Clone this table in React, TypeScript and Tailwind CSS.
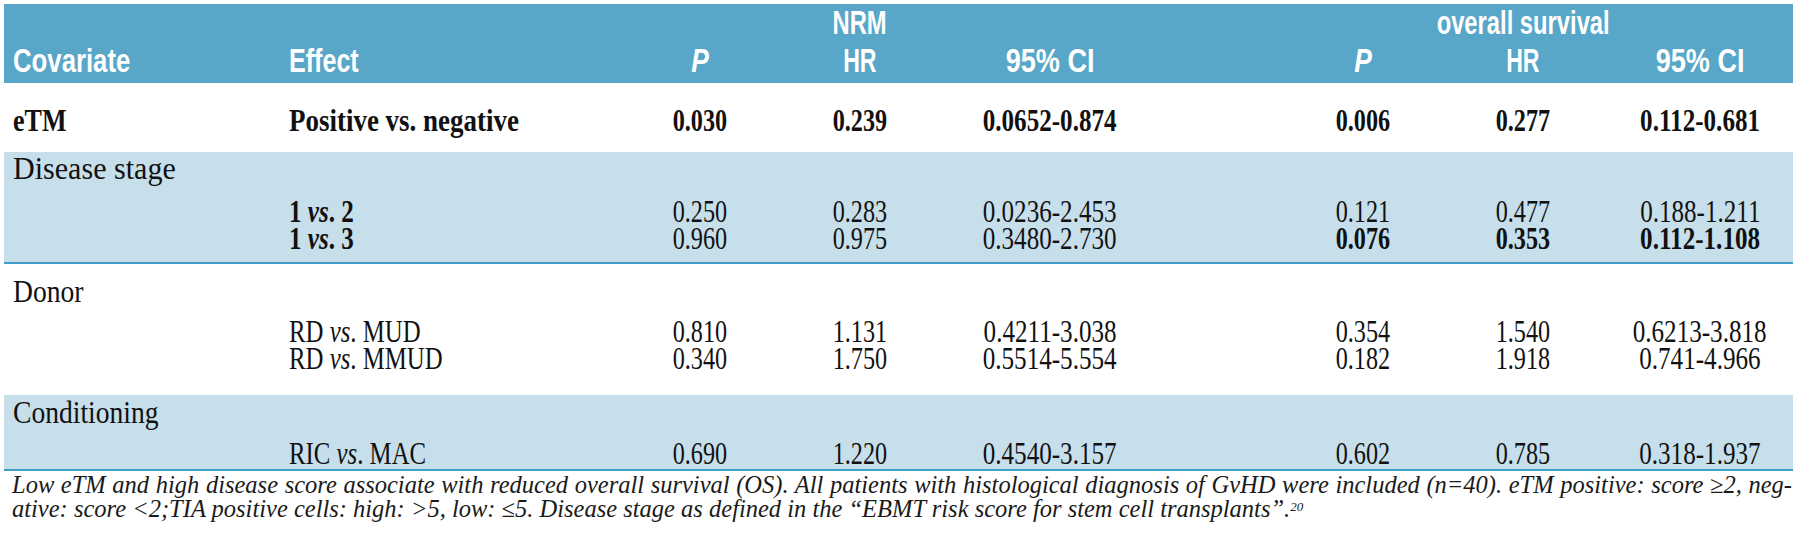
import React from "react";

const COLS =
  "grid grid-cols-[281px_355px_120px_200px_180px_163px_120px_200px_154px]";

function Txt({ children, cls }: { children: React.ReactNode; cls: string }) {
  return (
    <div className="flex items-center pl-[9px]">
      <span className={`inline-block origin-left whitespace-nowrap ${cls}`}>{children}</span>
    </div>
  );
}

function Eff({ children, cls }: { children: React.ReactNode; cls: string }) {
  return (
    <div className="flex items-center pl-[4px]">
      <span className={`inline-block origin-left whitespace-nowrap ${cls}`}>{children}</span>
    </div>
  );
}

function Num({ v, bold }: { v: string; bold?: boolean }) {
  const range = v.includes("-");
  let cls = "inline-block whitespace-nowrap scale-x-[0.78]";
  if (range && bold) cls = "inline-block whitespace-nowrap scale-x-[0.81] font-bold";
  else if (range) cls = "inline-block whitespace-nowrap scale-x-[0.81]";
  else if (bold) cls = "inline-block whitespace-nowrap scale-x-[0.78] font-bold";
  return (
    <div className="flex items-center justify-center">
      <span className={cls}>{v}</span>
    </div>
  );
}

function Head({ children, cls }: { children: React.ReactNode; cls: string }) {
  return (
    <div className="flex items-center justify-center">
      <span className={`inline-block whitespace-nowrap ${cls}`}>{children}</span>
    </div>
  );
}

type RowProps = {
  cov?: React.ReactNode;
  covCls?: string;
  eff?: React.ReactNode;
  effCls?: string;
  vals?: string[];
  bold?: boolean[];
  h: string;
};

function Row({ cov, covCls, eff, effCls, vals, bold, h }: RowProps) {
  const b = bold ?? [];
  return (
    <div className={`${COLS} ${h}`}>
      <Txt cls={covCls ?? ""}>{cov}</Txt>
      <Eff cls={effCls ?? ""}>{eff}</Eff>
      {vals ? (
        <>
          <Num v={vals[0]} bold={b[0]} />
          <Num v={vals[1]} bold={b[1]} />
          <Num v={vals[2]} bold={b[2]} />
          <div />
          <Num v={vals[3]} bold={b[3]} />
          <Num v={vals[4]} bold={b[4]} />
          <Num v={vals[5]} bold={b[5]} />
        </>
      ) : null}
    </div>
  );
}

export default function App() {
  return (
    <div className="w-[1800px] h-[542px] overflow-hidden bg-white pt-[4px] pl-[4px] text-[#111111]">
      <div className="w-[1789px] font-['Liberation_Serif',serif] text-[31px] leading-none">
        {/* Header */}
        <div className="bg-[#58a6c8] pb-[4px] font-['Liberation_Sans',sans-serif] text-[33px] font-bold leading-none text-white">
          <div className={`${COLS} h-[37px]`}>
            <div />
            <div />
            <div />
            <Head cls="scale-x-[0.72]">NRM</Head>
            <div />
            <div />
            <div />
            <Head cls="scale-x-[0.72]">overall survival</Head>
            <div />
          </div>
          <div className={`${COLS} h-[38px]`}>
            <div className="flex items-center pl-[9px]">
              <span className="inline-block origin-left scale-x-[0.78] whitespace-nowrap">Covariate</span>
            </div>
            <div className="flex items-center pl-[4px]">
              <span className="inline-block origin-left scale-x-[0.76] whitespace-nowrap">Effect</span>
            </div>
            <Head cls="scale-x-[0.8] italic">P</Head>
            <Head cls="scale-x-[0.7]">HR</Head>
            <Head cls="scale-x-[0.82]">95% CI</Head>
            <div />
            <Head cls="scale-x-[0.8] italic">P</Head>
            <Head cls="scale-x-[0.7]">HR</Head>
            <Head cls="scale-x-[0.82]">95% CI</Head>
          </div>
        </div>

        {/* eTM */}
        <div className="h-[69px] bg-white pt-[22px]">
          <Row
            h="h-[28px]"
            cov="eTM"
            covCls="font-bold scale-x-[0.84]"
            eff="Positive vs. negative"
            effCls="font-bold scale-x-[0.87]"
            vals={["0.030", "0.239", "0.0652-0.874", "0.006", "0.277", "0.112-0.681"]}
            bold={[true, true, true, true, true, true]}
          />
        </div>

        {/* Disease stage */}
        <div className="h-[112px] border-b-2 border-[#3f9dc7] bg-[#c7deeb]">
          <Row h="h-[32px]" cov="Disease stage" covCls="scale-x-[0.97]" />
          <div className="mt-[12px]">
            <Row
              h="h-[27px]"
              eff={
                <>
                  1 <i>vs</i>. 2
                </>
              }
              effCls="font-bold scale-x-[0.81]"
              vals={["0.250", "0.283", "0.0236-2.453", "0.121", "0.477", "0.188-1.211"]}
            />
            <Row
              h="h-[27px]"
              eff={
                <>
                  1 <i>vs</i>. 3
                </>
              }
              effCls="font-bold scale-x-[0.81]"
              vals={["0.960", "0.975", "0.3480-2.730", "0.076", "0.353", "0.112-1.108"]}
              bold={[false, false, false, true, true, true]}
            />
          </div>
        </div>

        {/* Donor */}
        <div className="h-[131px] bg-white pt-[11px]">
          <Row h="h-[32px]" cov="Donor" covCls="scale-x-[0.89]" />
          <div className="mt-[9px]">
            <Row
              h="h-[27px]"
              eff={
                <>
                  RD <i>vs</i>. MUD
                </>
              }
              effCls="scale-x-[0.8]"
              vals={["0.810", "1.131", "0.4211-3.038", "0.354", "1.540", "0.6213-3.818"]}
            />
            <Row
              h="h-[27px]"
              eff={
                <>
                  RD <i>vs</i>. MMUD
                </>
              }
              effCls="scale-x-[0.8]"
              vals={["0.340", "1.750", "0.5514-5.554", "0.182", "1.918", "0.741-4.966"]}
            />
          </div>
        </div>

        {/* Conditioning */}
        <div className="h-[76px] border-b-2 border-[#3f9dc7] bg-[#c7deeb] pt-[1px]">
          <Row h="h-[32px]" cov="Conditioning" covCls="scale-x-[0.89]" />
          <div className="mt-[10px]">
            <Row
              h="h-[28px]"
              eff={
                <>
                  RIC <i>vs</i>. MAC
                </>
              }
              effCls="scale-x-[0.8]"
              vals={["0.690", "1.220", "0.4540-3.157", "0.602", "0.785", "0.318-1.937"]}
            />
          </div>
        </div>
      </div>

      {/* Caption */}
      <div className="w-[1788px] pl-[8px] pt-[2px] font-['Liberation_Serif',serif] text-[24.5px] italic leading-[24px] text-[#1a1a1a]">
        <div className="whitespace-nowrap text-justify [text-align-last:justify]">
          Low eTM and high disease score associate with reduced overall survival (OS). All patients with histological diagnosis of GvHD were included (n=40). eTM positive: score ≥2, neg-
        </div>
        <div className="whitespace-nowrap">
          ative: score &lt;2;TIA positive cells: high: &gt;5, low: ≤5. Disease stage as defined in the “EBMT risk score for stem cell transplants”.
          <sup className="text-[13px]">20</sup>
        </div>
      </div>
    </div>
  );
}
